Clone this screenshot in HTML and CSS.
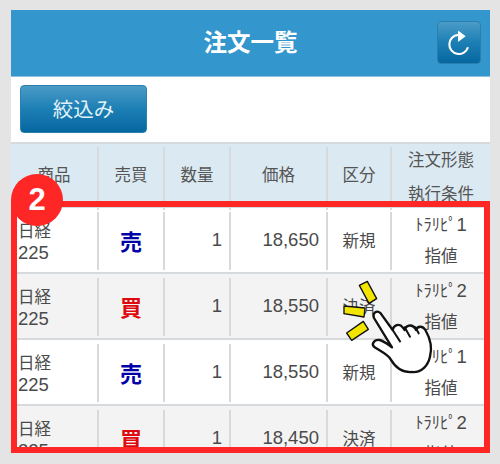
FILE: index.html
```html
<!DOCTYPE html>
<html lang="ja">
<head>
<meta charset="utf-8">
<title>注文一覧</title>
<link rel="stylesheet" href="styles.css">
</head>
<body>
<div class="app">
  <div class="nav">
    <h1 class="nav-title">注文一覧</h1>
    <a class="btn reload">
      <svg width="44" height="43" viewBox="0 0 44 43">
        <path class="reload-arc" d="M21 13.5a10 10 0 1 0 10.4 13"/>
        <path class="reload-head" d="M21 9l8 6-8 6z"/>
      </svg>
    </a>
  </div>
  <div class="tools"><a class="btn narrow">絞込み</a></div>

  <div class="row head">
    <div class="cell">商品</div>
    <div class="cell">売買</div>
    <div class="cell">数量</div>
    <div class="cell">価格</div>
    <div class="cell">区分</div>
    <div class="cell two"><span class="lines">注文形態<br>執行条件</span></div>
  </div>

  <div class="row">
    <div class="cell name">日経<br><span class="num">225</span></div>
    <div class="cell sell">売</div>
    <div class="cell right num">1</div>
    <div class="cell right num">18,650</div>
    <div class="cell">新規</div>
    <div class="cell cond"><span class="lines">ﾄﾗﾘﾋﾟ<span class="num">1</span><br>指値</span></div>
  </div>
  <div class="row even">
    <div class="cell name">日経<br><span class="num">225</span></div>
    <div class="cell buy">買</div>
    <div class="cell right num">1</div>
    <div class="cell right num">18,550</div>
    <div class="cell">決済</div>
    <div class="cell cond"><span class="lines">ﾄﾗﾘﾋﾟ<span class="num">2</span><br>指値</span></div>
  </div>
  <div class="row">
    <div class="cell name">日経<br><span class="num">225</span></div>
    <div class="cell sell">売</div>
    <div class="cell right num">1</div>
    <div class="cell right num">18,550</div>
    <div class="cell">新規</div>
    <div class="cell cond"><span class="lines">ﾄﾗﾘﾋﾟ<span class="num">1</span><br>指値</span></div>
  </div>
  <div class="row even">
    <div class="cell name">日経<br><span class="num">225</span></div>
    <div class="cell buy">買</div>
    <div class="cell right num">1</div>
    <div class="cell right num">18,450</div>
    <div class="cell">決済</div>
    <div class="cell cond"><span class="lines">ﾄﾗﾘﾋﾟ<span class="num">2</span><br>指値</span></div>
  </div>

  <!-- 説明用の重ね表示 -->
  <div class="frame"></div>
  <div class="badge">2</div>
  <svg class="hand" width="95" height="100" viewBox="270 135 285 300">
    <g class="spark">
      <path d="M328 160l24-12 28 52-23 14z"/>
      <path d="M282 222l63 6-3 27-60-10z"/>
      <path d="M290 303l50-35 15 24-50 33z"/>
    </g>
    <path class="palm" d="M372 258c-6-14 8-26 20-14l36 50c2-14 20-22 30-8l6 8c2-14 22-20 32-4l2 4c4-12 20-14 28 0 14 24 22 50 14 80-6 26-24 48-54 46-30 2-50-14-64-38-8-14-30-24-48-36-12-8-2-24 14-22 12 2 24 12 38 22z"/>
    <path class="crease" d="M428 294l22 34M464 286l16 28M496 286l10 18"/>
  </svg>
</div>
</body>
</html>
```
FILE: styles.css
```css
*{
	margin:0;
	padding:0;
	box-sizing:border-box;}
html,body{
	height:464px;
	overflow:hidden;}
body{
	background:#e4e4e4;
	font-family:"Noto Sans CJK JP","Liberation Sans",sans-serif;
	color:#4a4a4a;}
.app{
	position:relative;
	width:479px;
	height:443px;
	margin:10px 0 0 11px;
	background:#fff;
	overflow:hidden;}

.nav{
	display:flex;
	align-items:center;
	justify-content:center;
	position:relative;
	height:67px;
	padding-bottom:2px;
	background:#3396cc;
	border-bottom:1px solid #8cc0dc;}
.nav-title{
	font-size:23.5px;
	line-height:1;
	font-weight:700;
	color:#fff;}
.btn{
	display:flex;
	align-items:center;
	justify-content:center;
	border:1px solid #2b7fae;
	border-radius:4px;
	background:linear-gradient(#4b9bc7,#1c7fb4 50%,#0667a0);
	color:#e2f1f9;}
.reload{
	position:absolute;
	top:11px;
	right:9px;
	width:44px;
	height:43px;}
.reload-arc{
	fill:none;
	stroke:#fff;
	stroke-width:2.2;}
.reload-head{
	fill:#fff;}
.tools{
	height:65px;
	padding:8px 0 0 9px;}
.narrow{
	width:127px;
	height:48px;
	padding-bottom:2px;
	font-size:20.5px;}

.row{
	display:grid;
	grid-template-columns:88px 66px 66px 97px 64px 98px;
	height:66px;
	padding:4px 0;
	border-bottom:2px solid #d6dadc;
	font-size:16.5px;}
.even{
	background:#f3f3f3;}
.head{
	height:66px;
	padding:3px 0 0;
	background:#dbe9f2;
	border-top:2px solid #d6dadc;
	color:#555;}
.head .cell{
	padding-bottom:9px;}
.cell{
	display:flex;
	flex-direction:column;
	align-items:center;
	justify-content:center;
	padding-bottom:2px;
	border-right:2px solid #d6dadc;
	text-align:center;
	white-space:nowrap;}
.cell:last-child{
	border-right:0;}
.head .two,
.cond{
	display:block;
	padding-bottom:0;}
.two{
	line-height:34px;}
.cond{
	line-height:30px;}
.lines{
	display:block;
	margin-top:-3px;}
.two .lines{
	margin-top:-5px;}
.name{
	display:block;
	padding:7px 0 0 7px;
	line-height:22px;
	text-align:left;}
.num{
	font-family:"Liberation Sans",sans-serif;
	font-size:18.5px;}
.right{
	align-items:flex-end;
	padding-right:7px;}
.sell{
	color:#0000a8;
	font-size:22px;
	font-weight:700;}
.buy{
	color:#e0080f;
	font-size:22px;
	font-weight:700;}

.frame{
	position:absolute;
	left:0;
	top:191px;
	right:0;
	bottom:0;
	border:6px solid #ff2626;}
.badge{
	position:absolute;
	left:0;
	top:164px;
	width:52px;
	height:52px;
	border-radius:50%;
	background:#ff2626;
	color:#fff;
	font:700 31px/52px "Liberation Sans",sans-serif;
	text-align:center;}
.hand{
	position:absolute;
	left:329px;
	top:267px;}
.spark path{
	fill:#f2e600;
	stroke:#111;
	stroke-width:4;
	stroke-linejoin:round;}
.palm{
	fill:#fff;
	stroke:#111;
	stroke-width:7;
	stroke-linejoin:round;}
.crease{
	fill:none;
	stroke:#111;
	stroke-width:6;
	stroke-linecap:round;}
```
